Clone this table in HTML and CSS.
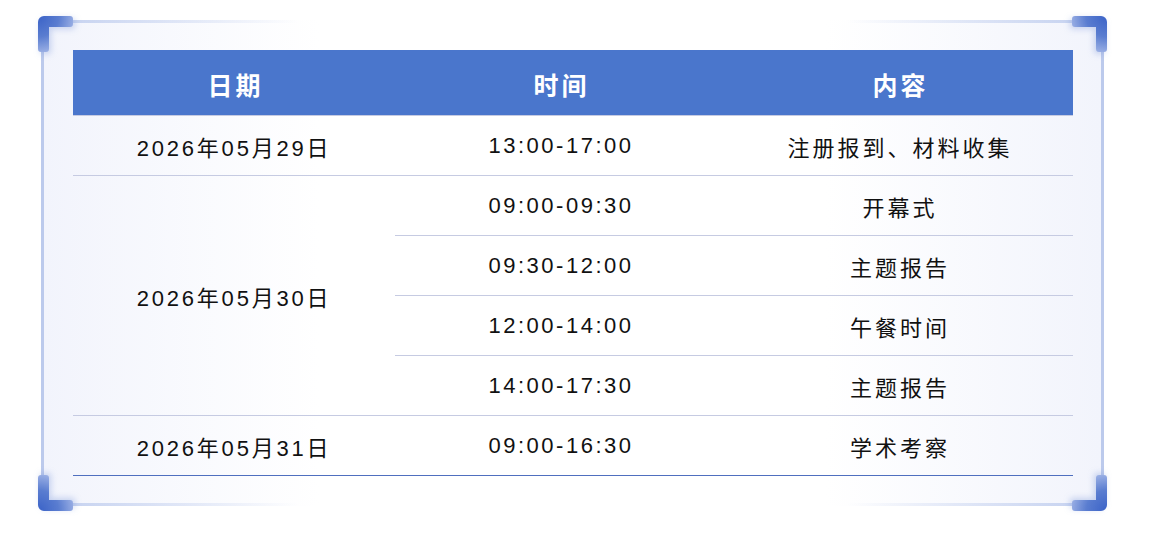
FILE: index.html
```html
<!DOCTYPE html>
<html lang="zh-CN">
<head>
<meta charset="utf-8">
<title>日程安排</title>
<link rel="stylesheet" href="styles.css">
</head>
<body>
<div class="page">
  <div class="frame">
    <svg class="corner corner-tl" viewBox="0 0 36 36" width="36" height="36" aria-hidden="true">
      <defs>
        <radialGradient id="cg" cx="0" cy="0" r="38" gradientUnits="userSpaceOnUse">
          <stop offset="0" stop-color="#3a62c7"/>
          <stop offset="0.55" stop-color="#5a7dd0"/>
          <stop offset="1" stop-color="#9fb3e6"/>
        </radialGradient>
      </defs>
      <path d="M6,0 H32 a3,3 0 0 1 3,3 V8 a3,3 0 0 1 -3,3 H11 V33 a3,3 0 0 1 -3,3 H3 a3,3 0 0 1 -3,-3 V6 a6,6 0 0 1 6,-6 Z" fill="url(#cg)"/>
    </svg>
    <svg class="corner corner-tr" viewBox="0 0 36 36" width="36" height="36" aria-hidden="true">
      <path d="M6,0 H32 a3,3 0 0 1 3,3 V8 a3,3 0 0 1 -3,3 H11 V33 a3,3 0 0 1 -3,3 H3 a3,3 0 0 1 -3,-3 V6 a6,6 0 0 1 6,-6 Z" fill="url(#cg)"/>
    </svg>
    <svg class="corner corner-bl" viewBox="0 0 36 36" width="36" height="36" aria-hidden="true">
      <path d="M6,0 H32 a3,3 0 0 1 3,3 V8 a3,3 0 0 1 -3,3 H11 V33 a3,3 0 0 1 -3,3 H3 a3,3 0 0 1 -3,-3 V6 a6,6 0 0 1 6,-6 Z" fill="url(#cg)"/>
    </svg>
    <svg class="corner corner-br" viewBox="0 0 36 36" width="36" height="36" aria-hidden="true">
      <path d="M6,0 H32 a3,3 0 0 1 3,3 V8 a3,3 0 0 1 -3,3 H11 V33 a3,3 0 0 1 -3,3 H3 a3,3 0 0 1 -3,-3 V6 a6,6 0 0 1 6,-6 Z" fill="url(#cg)"/>
    </svg>

    <table class="schedule">
      <colgroup>
        <col class="col-date">
        <col class="col-time">
        <col class="col-content">
      </colgroup>
      <thead>
        <tr>
          <th>日期</th>
          <th>时间</th>
          <th>内容</th>
        </tr>
      </thead>
      <tbody>
        <tr>
          <td class="date">2026年05月29日</td>
          <td class="time">13:00-17:00</td>
          <td class="content">注册报到、材料收集</td>
        </tr>
        <tr>
          <td class="date" rowspan="4">2026年05月30日</td>
          <td class="time">09:00-09:30</td>
          <td class="content">开幕式</td>
        </tr>
        <tr>
          <td class="time">09:30-12:00</td>
          <td class="content">主题报告</td>
        </tr>
        <tr>
          <td class="time">12:00-14:00</td>
          <td class="content">午餐时间</td>
        </tr>
        <tr>
          <td class="time">14:00-17:30</td>
          <td class="content">主题报告</td>
        </tr>
        <tr class="last">
          <td class="date">2026年05月31日</td>
          <td class="time">09:00-16:30</td>
          <td class="content">学术考察</td>
        </tr>
      </tbody>
    </table>
  </div>
</div>
</body>
</html>
```

FILE: styles.css
```css
* {
  box-sizing: border-box;
}

html, body {
  margin: 0;
  padding: 0;
  background: #ffffff;
}

body {
  font-family: "Liberation Sans", Arial, "Noto Sans CJK SC", sans-serif;
  color: #111111;
}

.page {
  padding: 20px 0 34px 41px;
}

.frame {
  position: relative;
  width: 1063px;
  padding: 30px 28px 30px 29px;
  border-left: 3px solid #bccaec;
  border-right: 3px solid #bccaec;
  background-color: #ffffff;
  background-image:
    linear-gradient(to right, #c3d0ef 0%, rgba(195, 208, 239, 0) 24%, rgba(195, 208, 239, 0) 76%, #c3d0ef 100%),
    linear-gradient(to right, #c3d0ef 0%, rgba(195, 208, 239, 0) 24%, rgba(195, 208, 239, 0) 76%, #c3d0ef 100%),
    linear-gradient(to right, #f2f4fc 0%, #ffffff 26%, #ffffff 74%, #f2f4fc 100%);
  background-size: 100% 3px, 100% 3px, 100% 100%;
  background-position: 0 0, 0 100%, 0 0;
  background-repeat: no-repeat;
}

.corner {
  position: absolute;
  width: 36px;
  height: 36px;
  filter: drop-shadow(2px 2px 3px rgba(74, 114, 204, 0.28));
}

.corner-tl {
  left: -6px;
  top: -4px;
}

.corner-tr {
  right: -6px;
  top: -4px;
  transform: scaleX(-1);
}

.corner-bl {
  left: -6px;
  bottom: -5px;
  transform: scaleY(-1);
}

.corner-br {
  right: -6px;
  bottom: -5px;
  transform: scale(-1, -1);
}

.schedule {
  width: 1000px;
  border-collapse: collapse;
  table-layout: fixed;
}

.col-date {
  width: 322px;
}

.col-time {
  width: 330px;
}

.col-content {
  width: 348px;
}

.schedule th {
  height: 65px;
  padding: 4px 0 0 3px;
  background: #4a76cc;
  color: #ffffff;
  font-size: 25px;
  font-weight: bold;
  letter-spacing: 3px;
  text-align: center;
}

.schedule td {
  height: 60px;
  padding: 1px 0 0 2px;
  text-align: center;
  vertical-align: middle;
  font-size: 22px;
  letter-spacing: 2.5px;
  border-top: 1px solid #c6cbe2;
  color: #111111;
}

.schedule td.date {
  padding-left: 0;
  letter-spacing: 2.8px;
}

.schedule td.content {
  letter-spacing: 3px;
}

.schedule tr.last td {
  border-bottom: 1px solid #4f6fbf;
}
```
